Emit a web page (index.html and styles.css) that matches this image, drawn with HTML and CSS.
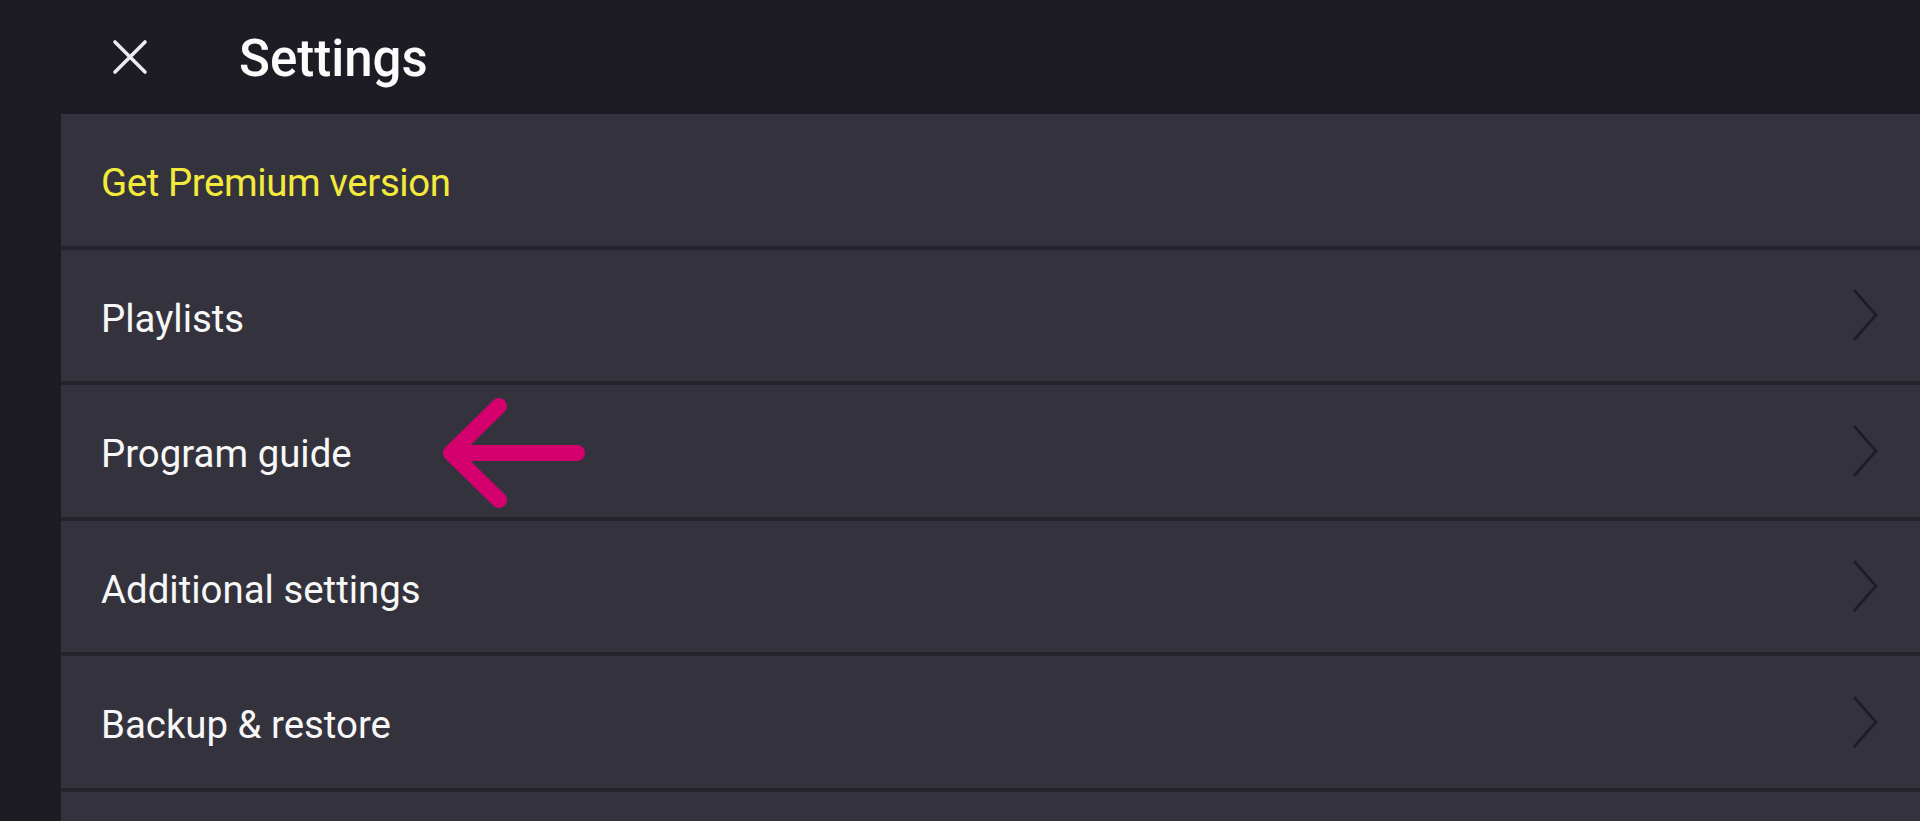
FILE: index.html
```html
<!DOCTYPE html>
<html lang="en">
<head>
<meta charset="utf-8">
<title>Settings</title>
<link rel="stylesheet" href="styles.css">
</head>
<body>
<header class="topbar">
  <button class="close" aria-label="Close">
    <svg width="36" height="36" viewBox="0 0 36 36"><path d="M3 3 L33 33 M33 3 L3 33" stroke="#ececee" stroke-width="3.6" stroke-linecap="round" fill="none"/></svg>
  </button>
  <h1 class="title">Settings</h1>
</header>
<main class="layout">
  <div class="rail"></div>
  <ul class="list">
    <li class="row premium"><span class="label">Get Premium version</span></li>
    <li class="row"><span class="label">Playlists</span><svg class="chev" width="26" height="54" viewBox="0 0 26 54"><path d="M2 2 L24 27 L2 52" stroke="#1e1d26" stroke-width="2.8" fill="none"/></svg></li>
    <li class="row has-arrow"><span class="label">Program guide</span><svg class="chev" width="26" height="54" viewBox="0 0 26 54"><path d="M2 2 L24 27 L2 52" stroke="#1e1d26" stroke-width="2.8" fill="none"/></svg>
      <svg class="pointer" width="160" height="120" viewBox="0 0 160 120"><path d="M140 58 L14 58 M62 11 L14 58 L62 105" stroke="#d3006d" stroke-width="16" stroke-linecap="round" stroke-linejoin="round" fill="none"/></svg>
    </li>
    <li class="row"><span class="label">Additional settings</span><svg class="chev" width="26" height="54" viewBox="0 0 26 54"><path d="M2 2 L24 27 L2 52" stroke="#1e1d26" stroke-width="2.8" fill="none"/></svg></li>
    <li class="row"><span class="label">Backup &amp; restore</span><svg class="chev" width="26" height="54" viewBox="0 0 26 54"><path d="M2 2 L24 27 L2 52" stroke="#1e1d26" stroke-width="2.8" fill="none"/></svg></li>
    <li class="row"><span class="label">&nbsp;</span></li>
  </ul>
</main>
</body>
</html>
```
FILE: styles.css
```css
html, body {
  margin: 0;
  padding: 0;
  height: 100%;
  overflow: hidden;
}
body {
  background: #1d1c25;
  font-family: Roboto, "Liberation Sans", sans-serif;
  color: #f7f7f7;
}
.topbar {
  height: 114px;
  display: flex;
  align-items: center;
}
.close {
  margin-left: 112px;
  width: 36px;
  height: 36px;
  padding: 0;
  border: 0;
  background: none;
  display: flex;
}
.title {
  margin: 0 0 0 91px;
  font-size: 51px;
  font-weight: 500;
  color: #fbfbfb;
  line-height: 1;
  position: relative;
  top: 1px;
}
.layout {
  display: flex;
}
.rail {
  width: 61px;
  flex: none;
}
.list {
  list-style: none;
  margin: 0;
  padding: 0;
  flex: 1;
}
.row {
  position: relative;
  height: 131.5px;
  border-bottom: 4px solid #25242c;
  background: #34333d;
  display: flex;
  align-items: center;
  justify-content: space-between;
  padding: 0 42px 0 40px;
  box-sizing: content-box;
}
.label {
  font-size: 38.4px;
  color: #f7f7f7;
  position: relative;
  top: 3px;
}
.premium .label {
  color: #f3ea3c;
  letter-spacing: -0.4px;
}
.chev {
  flex: none;
}
.pointer {
  position: absolute;
  left: 376px;
  top: 10px;
}
```
